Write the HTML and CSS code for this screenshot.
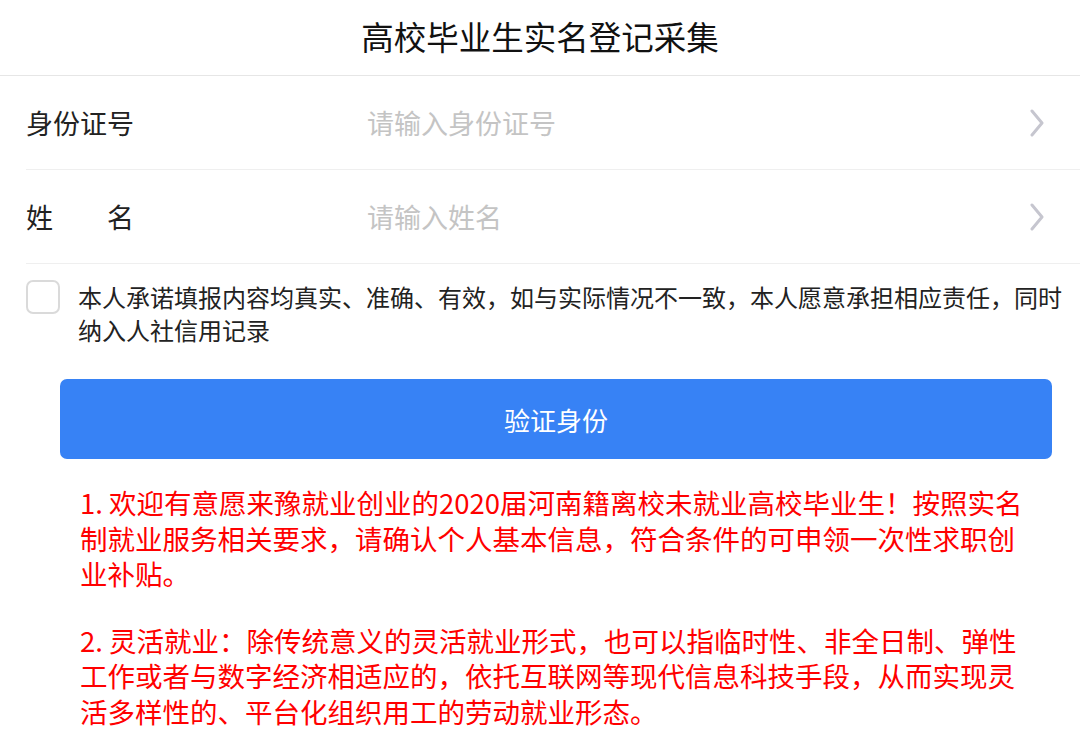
FILE: index.html
```html
<!DOCTYPE html>
<html lang="zh-CN">
<head>
    <meta charset="UTF-8">
    <meta name="viewport" content="width=device-width, initial-scale=1.0">
    <title>高校毕业生实名登记采集</title>
    <link rel="stylesheet" href="styles.css">
</head>
<body>
    <header class="top-bar">
        <h1>高校毕业生实名登记采集</h1>
    </header>

    <form class="form" id="verifyForm">
        <div class="field">
            <label class="field-label" for="idCard">身份证号</label>
            <input class="field-input" id="idCard" type="text" placeholder="请输入身份证号">
            <svg class="arrow" width="14" height="28" viewBox="0 0 14 28">
                <path d="M2 2 L12 14 L2 26" fill="none" stroke="#c6c6cf" stroke-width="3" stroke-linecap="round" stroke-linejoin="round"/>
            </svg>
        </div>
        <div class="field">
            <label class="field-label" for="userName">姓&emsp;&emsp;名</label>
            <input class="field-input" id="userName" type="text" placeholder="请输入姓名">
            <svg class="arrow" width="14" height="28" viewBox="0 0 14 28">
                <path d="M2 2 L12 14 L2 26" fill="none" stroke="#c6c6cf" stroke-width="3" stroke-linecap="round" stroke-linejoin="round"/>
            </svg>
        </div>

        <label class="agree">
            <input type="checkbox" class="agree-box">
            <span class="agree-text">本人承诺填报内容均真实、准确、有效，如与实际情况不一致，本人愿意承担相应责任，同时纳入人社信用记录</span>
        </label>

        <button type="button" class="submit-btn">验证身份</button>
    </form>

    <div class="notice">
        <p>1. 欢迎有意愿来豫就业创业的2020届河南籍离校未就业高校毕业生！按照实名制就业服务相关要求，请确认个人基本信息，符合条件的可申领一次性求职创业补贴。</p>
        <p>2. 灵活就业：除传统意义的灵活就业形式，也可以指临时性、非全日制、弹性工作或者与数字经济相适应的，依托互联网等现代信息科技手段，从而实现灵活多样性的、平台化组织用工的劳动就业形态。</p>
    </div>
</body>
</html>
```

FILE: styles.css
```css
* {
    box-sizing: border-box;
}

body {
    margin: 0;
    background: #fff;
    color: #222;
    font-family: "Noto Sans CJK SC", "Noto Sans", sans-serif;
}

.top-bar {
    height: 76px;
    border-bottom: 1px solid #e6e6e6;
    display: flex;
    align-items: center;
    justify-content: center;
}

.top-bar h1 {
    margin: 0;
    font-size: 32.5px;
    font-weight: normal;
    color: #111;
    line-height: 1;
    padding-bottom: 2px;
}

.field {
    display: flex;
    align-items: center;
    height: 94px;
    margin-left: 26px;
    border-bottom: 1px solid #efefef;
}

.field-label {
    width: 341px;
    font-size: 27px;
    color: #222;
}

.field-input {
    flex: 1;
    border: none;
    outline: none;
    font-family: inherit;
    font-size: 27px;
    color: #333;
    padding: 0;
    background: transparent;
}

.field-input::placeholder {
    color: #c4c4c4;
}

.arrow {
    margin-right: 36px;
}

.agree {
    display: flex;
    align-items: flex-start;
    padding: 16px 14px 0 26px;
}

.agree-box {
    appearance: none;
    flex-shrink: 0;
    width: 34px;
    height: 34px;
    margin: 0 18px 0 0;
    border: 2px solid #dadada;
    border-radius: 7px;
    background: #fff;
}

.agree-text {
    font-size: 24px;
    line-height: 33px;
    color: #222;
}

.submit-btn {
    display: block;
    width: 992px;
    height: 80px;
    margin: 33px 0 0 60px;
    border: none;
    border-radius: 7px;
    background: #3782f5;
    color: #fff;
    font-family: inherit;
    font-size: 26px;
}

.notice {
    padding: 26px 45px 0 80px;
    color: #ff0000;
    font-size: 27.5px;
    line-height: 35.5px;
}

.notice p {
    margin: 0 0 31px;
}
```
